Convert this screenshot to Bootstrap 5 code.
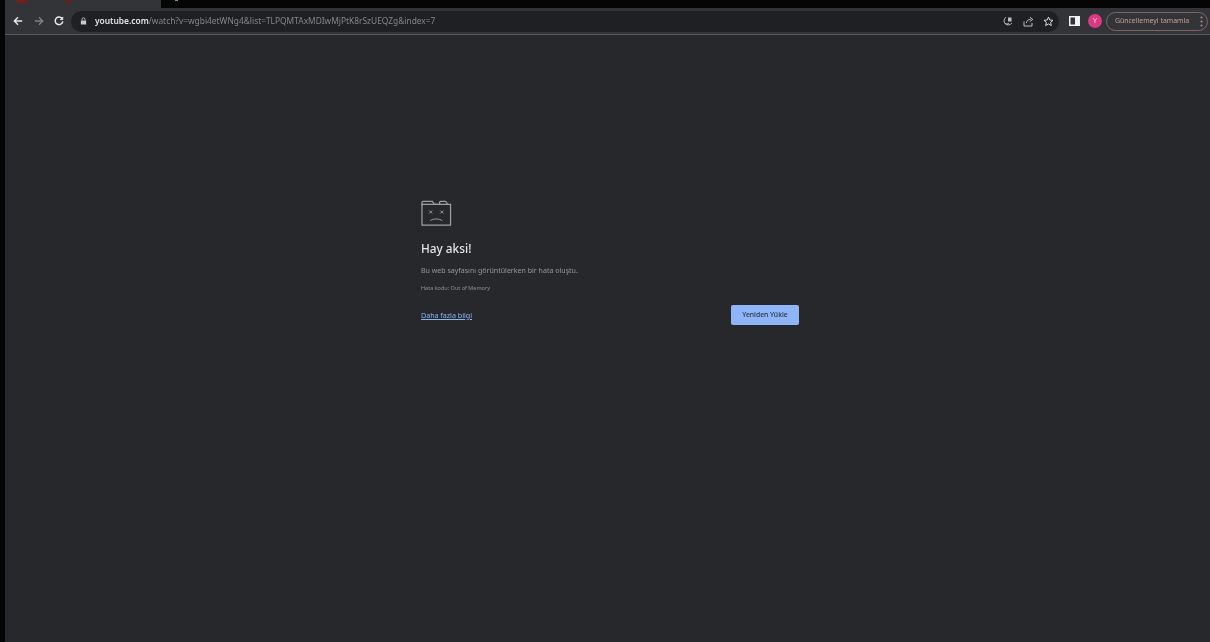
<!DOCTYPE html>
<html lang="tr">
<head>
    <meta charset="UTF-8">
    <meta name="viewport" content="width=device-width, initial-scale=1.0">
    <title>Hay aksi!</title>
    <link href="https://cdn.jsdelivr.net/npm/bootstrap@5.3.0/dist/css/bootstrap.min.css" rel="stylesheet">
    <style>
        html, body {
            height: 100%;
            overflow: hidden;
        }
        body {
            background: #050505;
            font-family: "Noto Sans", "Liberation Sans", Arial, sans-serif;
        }
        .screen {
            height: 642px;
            padding-left: 5px;
            filter: blur(0.45px);
        }
        .tab-strip {
            height: 8px;
        }
        .tab-shape {
            width: 156px;
            background: #333437;
            padding-left: 11px;
        }
        .tab-fav {
            width: 12px;
            height: 3px;
            background: #6e1f24;
        }
        .tab-dot {
            width: 7px;
            height: 3px;
            background: #5e2226;
            margin-left: 37px;
        }
        .tab-mark {
            width: 3px;
            height: 1px;
            background: #8d8d8d;
            margin-left: 14px;
        }
        .tool-bar {
            height: 27px;
            background: #333437;
            padding-left: 3px;
            padding-right: 2px;
            border-bottom: 1px solid #57585a;
        }
        .tool-btn {
            width: 20px;
            height: 20px;
        }
        .tool-btn-mid {
            margin-left: 1px;
        }
        .omni {
            height: 21px;
            background: #1f2023;
            border-radius: 11px;
            padding: 0 5px 0 9px;
            margin: 0 5px 0 2px;
        }
        .omni-actions {
            gap: 9.5px;
        }
        .url-text {
            font-size: 8.4px;
            color: #85868a;
            white-space: nowrap;
        }
        .url-host {
            color: #e3e4e7;
            font-weight: 600;
        }
        .ava {
            width: 14px;
            height: 14px;
            background: #d93a80;
            color: #f5d5e4;
            font-size: 7px;
            line-height: 14px;
        }
        .update-pill {
            width: 102px;
            height: 19px;
            border: 1px solid #7d6664;
            border-radius: 10px;
            color: #c99f9d;
            font-size: 6.9px;
            padding: 0 4px 0 8px;
            white-space: nowrap;
        }
        .page-body {
            background: #27282b;
        }
        .err-box {
            width: 378px;
            margin-top: 165px;
            margin-left: 5px;
        }
        .err-title {
            font-size: 11.8px;
            font-weight: 500;
            color: #e3e4e6;
            margin: 13px 0 0;
            line-height: 16px;
        }
        .err-msg {
            font-size: 7.05px;
            color: #96979a;
            margin: 9px 0 0;
            line-height: 10px;
        }
        .err-code {
            font-size: 5.5px;
            color: #8f9093;
            margin: 9px 0 0;
            line-height: 8px;
        }
        .err-link {
            font-size: 7.1px;
            color: #8ab4f8;
        }
        .reload-btn {
            width: 68px;
            height: 20px;
            padding: 0;
            border: 0;
            border-radius: 2px;
            background: #8eb5f7;
            color: #2b3342;
            font-size: 6.8px;
            font-weight: 500;
        }
        .reload-btn:hover {
            background: #8eb5f7;
            color: #2b3342;
        }
        .err-actions {
            margin-top: 13px;
        }
    </style>
</head>
<body>
    <div class="screen d-flex flex-column">
        <div class="tab-strip d-flex flex-shrink-0">
            <div class="tab-shape d-flex">
                <div class="tab-fav"></div>
                <div class="tab-dot"></div>
            </div>
            <div class="tab-mark"></div>
        </div>
        <div class="tool-bar d-flex align-items-center flex-shrink-0">
            <div class="tool-btn d-flex align-items-center justify-content-center">
                <svg width="10" height="10" viewBox="0 0 12 12" fill="none" stroke="#e8eaed" stroke-width="1.7"><path d="M11 6H1.800M6 1.600 1.600 6 6 10.400"/></svg>
            </div>
            <div class="tool-btn tool-btn-mid d-flex align-items-center justify-content-center">
                <svg width="10" height="10" viewBox="0 0 12 12" fill="none" stroke="#7f8082" stroke-width="1.7"><path d="M1 6h9.200M6 1.600 10.400 6 6 10.400"/></svg>
            </div>
            <div class="tool-btn d-flex align-items-center justify-content-center">
                <svg width="10" height="10" viewBox="0 0 12 12" fill="none" stroke="#e8eaed" stroke-width="1.7"><path d="M10 3.400A4.600 4.600 0 1 0 10.600 6.400"/><path d="M10.600 1v3.400H7.200" fill="#e8eaed" stroke-width=".8"/></svg>
            </div>
            <div class="omni d-flex align-items-center flex-grow-1">
                <svg class="flex-shrink-0" width="7" height="8" viewBox="0 0 8 9"><path d="M1 4h6v4.500H1z" fill="#c8c9cc"/><path d="M2.300 4V2.600a1.700 1.700 0 0 1 3.400 0V4" fill="none" stroke="#c8c9cc"/></svg>
                <span class="url-text ms-1 ps-1"><span class="url-host">youtube.com</span>/watch?v=wgbi4etWNg4&amp;list=TLPQMTAxMDIwMjPtK8rSzUEQZg&amp;index=7</span>
                <div class="omni-actions d-flex align-items-center ms-auto">
                    <svg width="11" height="11" viewBox="0 0 11 11" fill="none" stroke="#bcbdbf"><path d="M4 1.200A4.200 4.200 0 1 0 9.800 7"/><path d="M6 1.500h3.500v4H6z" fill="#bcbdbf" stroke="none"/><path d="M3 7.400c1 .8 3 .8 4 0"/></svg>
                    <svg width="11" height="11" viewBox="0 0 11 11" fill="none" stroke="#bcbdbf"><path d="M1 5.500v4.500h8V7"/><path d="M3.400 7c.2-2.400 2-3.600 4.300-3.600"/><path d="M6.800 1.200l3 2.200-3 2.200"/></svg>
                    <svg width="11" height="11" viewBox="0 0 11 11" fill="none" stroke="#d8d9db"><path d="M5.500 1l1.300 3 3.200.3-2.400 2.100.7 3.200-2.800-1.700-2.800 1.700.7-3.200L1 4.300l3.200-.3z"/></svg>
                </div>
            </div>
            <div class="tool-btn d-flex align-items-center justify-content-center">
                <svg width="11" height="10" viewBox="0 0 11 10"><path d="M0 0h11v10H0z" fill="#f1f2f3"/><path d="M1.500 1.500h4.500v7H1.500z" fill="#333437"/></svg>
            </div>
            <div class="ava rounded-circle text-center flex-shrink-0 mx-1">Y</div>
            <div class="update-pill d-flex align-items-center justify-content-between flex-shrink-0">
                <span>Güncellemeyi tamamla</span>
                <svg width="3" height="11" viewBox="0 0 3 11" fill="#a88a88"><circle cx="1.500" cy="1.500" r="1.100"/><circle cx="1.500" cy="5.500" r="1.100"/><circle cx="1.500" cy="9.500" r="1.100"/></svg>
            </div>
        </div>
        <div class="page-body flex-grow-1 d-flex justify-content-center">
            <div class="err-box">
                <svg class="d-block" width="31" height="27" viewBox="0 0 32 27" fill="none" stroke="#9d9ea0" stroke-width="1.300">
                    <path d="M1 5V2.200C1 1.500 1.500 1 2.200 1h9.600l2 3h5.400V2.200c0-.7.5-1.200 1.200-1.200h4.400c.7 0 1.400.5 1.700 1.200L27.400 4"/>
                    <path d="M1 4h29.500v21.500H1z"/>
                    <path d="M8.500 10.500l3 3M11.500 10.500l-3 3M20 10.500l3 3M23 10.500l-3 3" stroke-width="1"/>
                    <path d="M9.500 21c3-2.500 9.500-2.500 12.500 0" stroke-width="1"/>
                </svg>
                <h1 class="err-title">Hay aksi!</h1>
                <p class="err-msg">Bu web sayfasını görüntülerken bir hata oluştu.</p>
                <p class="err-code">Hata kodu: Out of Memory</p>
                <div class="err-actions d-flex justify-content-between align-items-center">
                    <a class="err-link" href="#">Daha fazla bilgi</a>
                    <button class="btn reload-btn" type="button">Yeniden Yükle</button>
                </div>
            </div>
        </div>
    </div>
</body>
</html>
